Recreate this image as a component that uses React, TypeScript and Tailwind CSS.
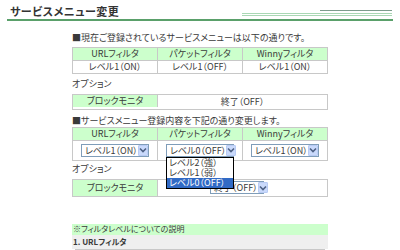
const font = "font-['Noto_Sans_CJK_JP','Noto_Sans',sans-serif] [font-feature-settings:'palt']"

const current = ['レベル1（ON）', 'レベル1（OFF）', 'レベル1（ON）']
const filters = ['URLフィルタ', 'パケットフィルタ', 'Winnyフィルタ']

function Chevron() {
  return (
    <span className="flex h-[11px] w-[12px] items-center justify-center rounded-[1px] border border-[#b8cbf4] bg-[#c9d9fb]">
      <svg width="8" height="6" viewBox="0 0 8 6">
        <path d="M1 1.5 L4 4.5 L7 1.5" fill="none" stroke="#4d6185" strokeWidth="1.6" />
      </svg>
    </span>
  )
}

function FakeSelect({ value, className }: { value: string; className: string }) {
  return (
    <div className={`flex h-[13px] items-center justify-between border border-[#7f9db9] bg-white ${className}`}>
      <span className="pl-[3px] leading-none whitespace-nowrap">{value}</span>
      <Chevron />
    </div>
  )
}

export default function App() {
  return (
    <div className={`relative h-[250px] w-[400px] overflow-hidden bg-white text-[9px] text-[#3a3a3a] ${font}`}>
      {/* title */}
      <div className="relative mx-[7px] pt-[5px] border-b-2 border-[#5aa06a] pb-[2px]">
        <h1 className="pl-[3px] text-[11px] font-bold leading-[12px] text-[#333] tracking-[0.5px]">サービスメニュー変更</h1>
        <div className="absolute right-[1px] top-[10px] h-[1px] w-[72px] bg-[#7c9c8c]" />
        <div className="absolute right-[1px] top-[13px] h-[3px] w-[150px] border-y border-[#a9d8b4]" />
      </div>

      <div className="ml-[72px] w-[256px]">
        <p className="mt-[12px] leading-[10px]">■現在ご登録されているサービスメニューは以下の通りです。</p>

        <div className="mt-[4px] grid grid-cols-3 border-l border-t border-[#c8c8c8]">
          {filters.map(f => (
            <div key={f} className="flex h-[13px] items-center justify-center border-b border-r border-[#c8c8c8] bg-[#ccffcc]">{f}</div>
          ))}
          {current.map((c, i) => (
            <div key={i} className="flex h-[13px] items-center justify-center border-b border-r border-[#c8c8c8]">{c}</div>
          ))}
        </div>

        <p className="mt-[5px] leading-[10px]">オプション</p>

        <div className="mt-[5px] flex border border-[#c8c8c8]">
          <div className="flex h-[12px] w-[85px] items-center justify-center border-r border-[#c8c8c8] bg-[#ccffcc]">ブロックモニタ</div>
          <div className="flex flex-1 items-center justify-center">終了（OFF）</div>
        </div>

        <p className="mt-[6px] leading-[10px]">■サービスメニュー登録内容を下記の通り変更します。</p>

        <div className="mt-[1px] grid grid-cols-3 border-l border-t border-[#c8c8c8]">
          {filters.map(f => (
            <div key={f} className="flex h-[13px] items-center justify-center border-b border-r border-[#c8c8c8] bg-[#ccffcc]">{f}</div>
          ))}
          <div className="flex h-[20px] items-center justify-center border-b border-r border-[#c8c8c8]">
            <FakeSelect value="レベル1（ON）" className="w-[68px]" />
          </div>
          <div className="relative flex h-[20px] items-center justify-center border-b border-r border-[#c8c8c8]">
            <FakeSelect value="レベル0（OFF）" className="w-[68px]" />
            <div className="absolute left-[8px] top-[16px] z-10 w-[68px] border border-black bg-white leading-[10px]">
              <div className="pl-[2px]">レベル2（強）</div>
              <div className="pl-[2px]">レベル1（弱）</div>
              <div className="bg-[#316ac5] pl-[2px] text-white">レベル0（OFF）</div>
            </div>
          </div>
          <div className="flex h-[20px] items-center justify-center border-b border-r border-[#c8c8c8]">
            <FakeSelect value="レベル1（ON）" className="w-[68px]" />
          </div>
        </div>

        <p className="mt-[3px] leading-[10px]">オプション</p>

        <div className="mt-[5px] flex border border-[#c8c8c8]">
          <div className="flex h-[16px] w-[85px] items-center justify-center border-r border-[#c8c8c8] bg-[#ccffcc]">ブロックモニタ</div>
          <div className="flex flex-1 items-center pl-[52px]">
            <FakeSelect value="終了（OFF）" className="w-[54px]" />
          </div>
        </div>

        <div className="mt-[27px] flex h-[11px] items-center bg-[#ccffcc] pl-[1px] text-[8px]">※フィルタレベルについての説明</div>
        <div className="flex h-[14px] items-center bg-[#efefef] pl-[1px] text-[8px] font-bold">1. URLフィルタ</div>
        <div className="mx-[3px] flex h-[20px] border border-[#c8c8c8]">
          <div className="w-[60px] border-r border-[#c8c8c8]" />
        </div>
      </div>
    </div>
  )
}
